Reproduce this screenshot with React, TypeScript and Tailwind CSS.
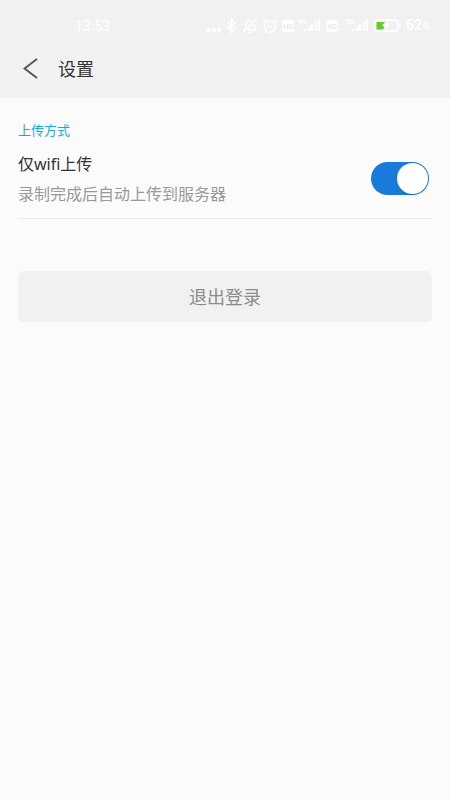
import { useState } from 'react';

function BluetoothIcon() {
  return (
    <svg className="h-4 w-3" viewBox="0 0 12 16" fill="none" stroke="currentColor" strokeWidth="1.6">
      <path d="M1.5 4.5 9 11 5.5 14.3V1.7L9 5l-7.5 6.5" />
      <path d="M0 8h1.6M9.4 8H11" />
    </svg>
  );
}

function MutedBellIcon() {
  return (
    <svg className="h-4 w-4" viewBox="0 0 16 16" fill="none" stroke="currentColor" strokeWidth="1.6">
      <path d="M3.5 9V7a4.5 4.5 0 0 1 7-3.7M12.5 6v5.5M1 11.8h2M6 11.8h8.5M6.5 14.2h3M8 1v1.5" />
      <path d="M14 1.5 1.5 14" />
    </svg>
  );
}

function AlarmIcon() {
  return (
    <svg className="h-4 w-4" viewBox="0 0 16 16" fill="none" stroke="currentColor" strokeWidth="1.6">
      <circle cx="8" cy="8.5" r="5.6" />
      <path d="M5.5 7.5 8 9.8l2.8-2.3M1 4 3.8 1.5M15 4l-2.8-2.5" />
    </svg>
  );
}

function HdBadge() {
  return (
    <svg className="h-3 w-3" viewBox="0 0 12 12">
      <rect width="12" height="12" rx="3" fill="currentColor" />
      <text x="6" y="9" textAnchor="middle" fontSize="7" fill="#e2e2e2" fontFamily="Roboto, sans-serif">
        HD
      </text>
    </svg>
  );
}

function SignalIcon({ label }: { label: string }) {
  return (
    <svg className="h-4 w-6" viewBox="0 0 24 16" fill="currentColor">
      <text x="0" y="6" fontSize="7" fontWeight="700" fontFamily="Roboto, sans-serif">
        {label}
      </text>
      <rect x="6" y="11" width="2" height="2" />
      <rect x="10" y="8" width="2" height="5" />
      <rect x="13" y="6" width="2" height="7" />
      <rect x="17" y="4" width="2" height="9" />
      <rect x="20" y="2" width="2" height="11" />
    </svg>
  );
}

function BatteryIcon() {
  return (
    <svg className="h-4 w-7" viewBox="0 0 28 16" fill="none">
      <rect x="1" y="2.2" width="23" height="11" rx="3.2" stroke="currentColor" strokeWidth="1.7" />
      <path d="M25.2 6v4q2-.5 2-2t-2-2z" fill="currentColor" />
      <path d="M2.5 4h8.5L8 8h2.4l-1.2 3.4H2.5z" fill="#62ca33" />
      <path d="M14.5 3 9 8.6h3.3l-2 4.4 6-6.4h-3.4z" fill="currentColor" />
    </svg>
  );
}

function StatusBar() {
  return (
    <div className="flex h-9 items-end justify-between pr-5 pl-[75px] font-['Roboto',sans-serif] text-white">
      <span className="text-sm leading-5">13:53</span>
      <div className="flex h-5 items-center gap-1">
        <svg className="h-4 w-4" viewBox="0 0 16 16" fill="currentColor">
          <circle cx="2.5" cy="12" r="2" />
          <circle cx="8" cy="12" r="2" />
          <circle cx="13.5" cy="12" r="2" />
        </svg>
        <BluetoothIcon />
        <MutedBellIcon />
        <AlarmIcon />
        <HdBadge />
        <SignalIcon label="4G" />
        <HdBadge />
        <div className="flex items-center gap-1 pl-1">
          <SignalIcon label="5G" />
          <BatteryIcon />
          <span className="text-sm leading-4 font-medium">
            62<span className="text-[11px]">%</span>
          </span>
        </div>
      </div>
    </div>
  );
}

export default function App() {
  const [wifiOnly, setWifiOnly] = useState(true);

  return (
    <div className="min-h-screen bg-[#fbfbfb] font-['Noto_Sans','Noto_Sans_CJK_SC',sans-serif] text-[#333]">
      <header className="bg-[#f1f1f1] pb-2">
        <StatusBar />
        <div className="flex h-[54px] items-center pt-3 pl-4">
          <button type="button" aria-label="返回" className="flex h-8 w-7 items-center justify-center">
            <svg className="h-6 w-5" viewBox="0 0 20 24" fill="none" stroke="#505050" strokeWidth="1.8">
              <path d="M17 2 4.5 11.5 17 21" />
            </svg>
          </button>
          <h1 className="ml-[14px] text-lg leading-6">设置</h1>
        </div>
      </header>

      <main className="px-[18px] pt-[22px]">
        <section className="border-b border-[#ebebeb] pb-[10px]">
          <h2 className="text-[13px] leading-5 text-[#18a9dc]">上传方式</h2>
          <div className="mt-2 flex items-center justify-between pr-[3px]">
            <label htmlFor="wifi-only">
              <span className="block text-base leading-8">仅wifi上传</span>
              <span className="block text-base leading-7 text-[#999]">录制完成后自动上传到服务器</span>
            </label>
            <input
              id="wifi-only"
              type="checkbox"
              role="switch"
              checked={wifiOnly}
              onChange={(e) => setWifiOnly(e.target.checked)}
              className="h-[33px] w-[58px] shrink-0 cursor-pointer appearance-none rounded-full bg-gray-300 p-px before:block before:size-[31px] before:rounded-full before:bg-white before:shadow before:transition-transform checked:bg-[#187bdc] checked:before:translate-x-[25px]"
            />
          </div>
        </section>

        <button
          type="button"
          className="mt-[52px] h-[51px] w-full rounded-md bg-[#f1f1f1] text-lg text-[#8c8c8c]"
        >
          退出登录
        </button>
      </main>
    </div>
  );
}
